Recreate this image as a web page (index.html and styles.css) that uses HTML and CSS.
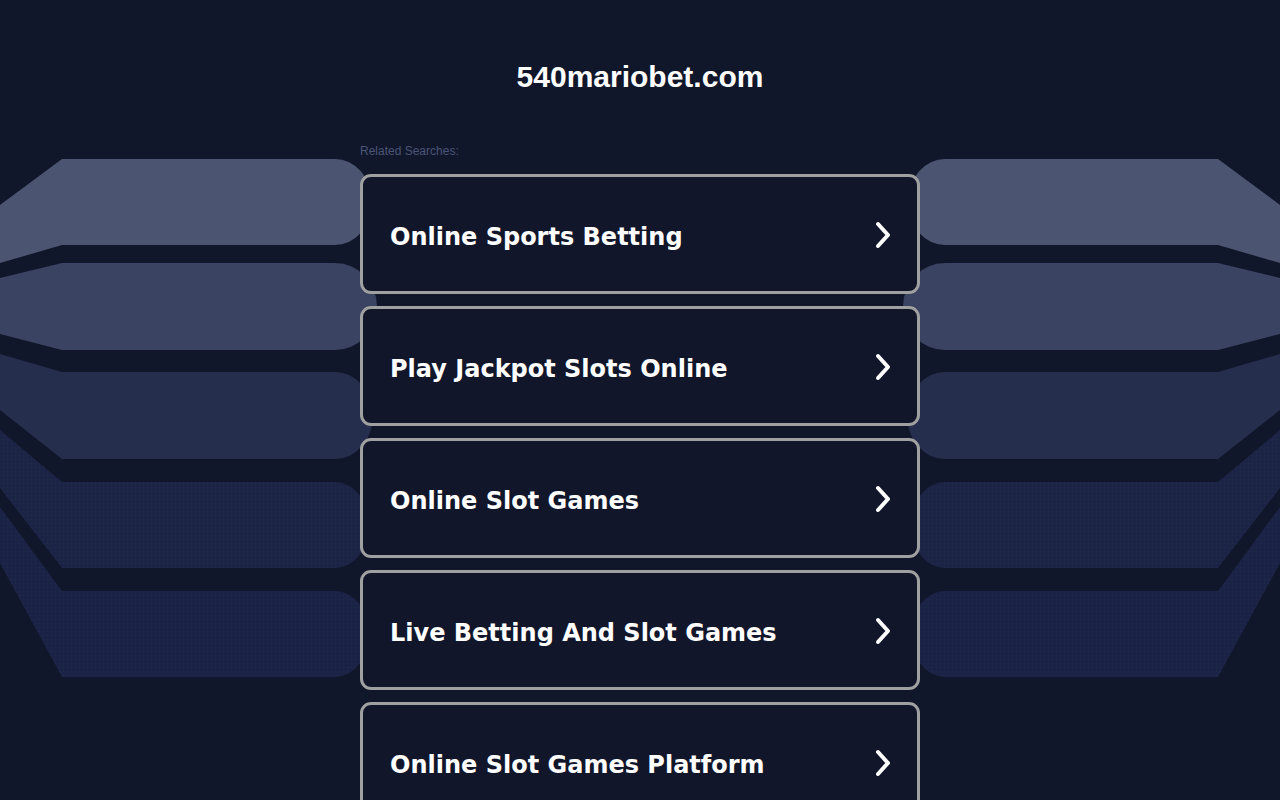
FILE: index.html
```html
<!DOCTYPE html>
<html lang="en">
<head>
<meta charset="utf-8">
<title>540mariobet.com</title>
<link rel="stylesheet" href="styles.css">
</head>
<body>
<svg class="backdrop" width="1280" height="800" viewBox="0 0 1280 800" aria-hidden="true">
  <defs>
    <pattern id="dots" width="4" height="4" patternUnits="userSpaceOnUse">
      <rect x="1" y="1" width="1" height="1" fill="#10162d" opacity="0.35"/>
      <rect x="3" y="3" width="1" height="1" fill="#2a3360" opacity="0.3"/>
    </pattern>
    <g id="bands">
      <path d="M62,159 H335 A37,43 0 0 1 335,245 H62 L0,263 V205 Z" fill="#4b5571"/>
      <path d="M62,263 H335 A42,43.5 0 0 1 335,350 H62 L0,334 V278 Z" fill="#3a4361"/>
      <path d="M62,372 H335 A38,43.5 0 0 1 335,459 H62 L0,410 V354 Z" fill="#252e4d"/>
      <path d="M62,482 H335 A34,43 0 0 1 335,568 H62 L0,488 V430 Z" fill="#1d2546"/>
      <path d="M62,482 H335 A34,43 0 0 1 335,568 H62 L0,488 V430 Z" fill="url(#dots)"/>
      <path d="M62,591 H335 A34,43 0 0 1 335,677 H62 L0,563 V507 Z" fill="#1b2446"/>
      <path d="M62,591 H335 A34,43 0 0 1 335,677 H62 L0,563 V507 Z" fill="url(#dots)"/>
    </g>
  </defs>
  <use href="#bands"/>
  <use href="#bands" transform="translate(1280,0) scale(-1,1)"/>
</svg>
<main class="page">
  <h1 class="title">540mariobet.com</h1>
  <p class="related">Related Searches:</p>
  <ul class="links">
    <li><a class="link-card" href="#"><span class="link-text">Online Sports Betting</span><svg class="chev" width="18" height="28" viewBox="0 0 18 28"><path d="M4,3 L14,14 L4,25" fill="none" stroke="#fff" stroke-width="4" stroke-linecap="round" stroke-linejoin="round"/></svg></a></li>
    <li><a class="link-card" href="#"><span class="link-text">Play Jackpot Slots Online</span><svg class="chev" width="18" height="28" viewBox="0 0 18 28"><path d="M4,3 L14,14 L4,25" fill="none" stroke="#fff" stroke-width="4" stroke-linecap="round" stroke-linejoin="round"/></svg></a></li>
    <li><a class="link-card" href="#"><span class="link-text">Online Slot Games</span><svg class="chev" width="18" height="28" viewBox="0 0 18 28"><path d="M4,3 L14,14 L4,25" fill="none" stroke="#fff" stroke-width="4" stroke-linecap="round" stroke-linejoin="round"/></svg></a></li>
    <li><a class="link-card" href="#"><span class="link-text">Live Betting And Slot Games</span><svg class="chev" width="18" height="28" viewBox="0 0 18 28"><path d="M4,3 L14,14 L4,25" fill="none" stroke="#fff" stroke-width="4" stroke-linecap="round" stroke-linejoin="round"/></svg></a></li>
    <li><a class="link-card" href="#"><span class="link-text">Online Slot Games Platform</span><svg class="chev" width="18" height="28" viewBox="0 0 18 28"><path d="M4,3 L14,14 L4,25" fill="none" stroke="#fff" stroke-width="4" stroke-linecap="round" stroke-linejoin="round"/></svg></a></li>
  </ul>
</main>
</body>
</html>
```
FILE: styles.css
```css
html, body {
  margin: 0;
  padding: 0;
  background: #11172b;
  overflow: hidden;
}
body {
  position: relative;
  min-height: 800px;
  font-family: "Liberation Sans", Arial, sans-serif;
}
.backdrop {
  position: absolute;
  top: 0;
  left: 0;
  z-index: 0;
}
.page {
  position: relative;
  z-index: 1;
  width: 560px;
  margin: 0 auto;
  padding-top: 60px;
}
.title {
  margin: 0;
  font-family: "Liberation Sans", Arial, sans-serif;
  font-weight: 700;
  font-size: 30px;
  line-height: 34px;
  color: #ffffff;
  text-align: center;
}
.related {
  margin: 50px 0 0;
  font-size: 12px;
  line-height: 14px;
  color: #4a5577;
}
.links {
  list-style: none;
  margin: 16px 0 0;
  padding: 0;
  display: flex;
  flex-direction: column;
  gap: 12px;
}
.link-card {
  box-sizing: border-box;
  height: 120px;
  display: flex;
  align-items: center;
  justify-content: space-between;
  padding: 0 25px 0 27px;
  border: 3px solid #a0a0a0;
  border-radius: 11px;
  background: #11162b;
  text-decoration: none;
}
.link-text {
  font-family: "DejaVu Sans", Verdana, sans-serif;
  font-weight: 700;
  font-size: 24px;
  color: #ffffff;
  margin-top: 6px;
}
.chev {
  display: block;
  flex: none;
  margin-top: 1px;
}
```
